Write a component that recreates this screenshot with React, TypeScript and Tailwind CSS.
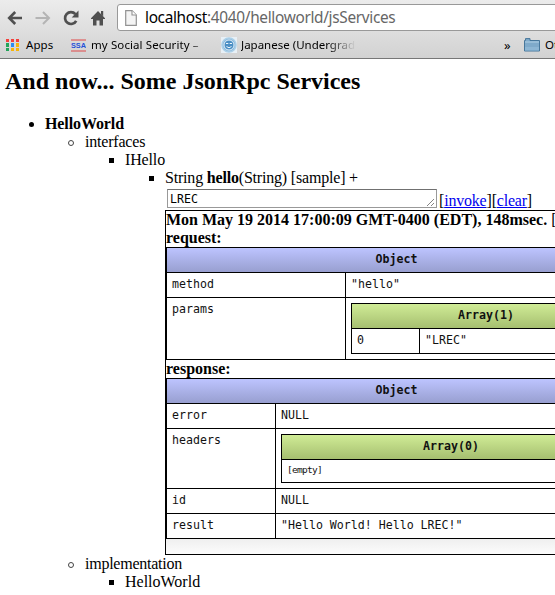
import type { ReactNode } from "react";

const mono = "font-['DejaVu_Sans_Mono',monospace] text-[11.6px] leading-[14px]";
const ui = "font-['Noto_Sans',sans-serif]";

function BackArrow() {
  return (
    <svg className="shrink-0" width="16" height="14" viewBox="0 0 16 14" fill="none" stroke="#505050" strokeWidth="2.6">
      <path d="M15 7H2.5M8.2 1L2.2 7L8.2 13" />
    </svg>
  );
}

function ForwardArrow() {
  return (
    <svg className="shrink-0" width="16" height="14" viewBox="0 0 16 14" fill="none" stroke="#b4b4b4" strokeWidth="2">
      <path d="M0.5 7H14M8 1L14 7L8 13" />
    </svg>
  );
}

function Reload() {
  return (
    <svg className="shrink-0" width="17" height="16" viewBox="0 0 17 16">
      <path d="M12.4 4.2A5.9 5.9 0 1 0 13.2 10.8" fill="none" stroke="#505050" strokeWidth="2.7" />
      <path d="M15.5 0.5V7.4H8.7Z" fill="#505050" />
    </svg>
  );
}

function Home() {
  return (
    <svg className="shrink-0" width="14" height="16" viewBox="0 0 14 16" fill="#505050">
      <path d="M7 1L14 8.3V9H12V15.5H8.5V10.5H5.5V15.5H2V9H0V8.3Z" />
      <path d="M10 1H12.2V6.5L10 4.5Z" />
    </svg>
  );
}

function PageIcon() {
  return (
    <svg className="shrink-0" width="12" height="16" viewBox="0 0 12 16">
      <path d="M0.7 0.7H7L11.3 5V15.3H0.7Z" fill="#f4f4f4" stroke="#929292" strokeWidth="1.2" />
      <path d="M7 0.7V5H11.3" fill="#fff" stroke="#929292" strokeWidth="1.1" />
    </svg>
  );
}

const appColors = [
  "bg-[#f4403b]", "bg-[#f4403b]", "bg-[#f4403b]",
  "bg-[#23a45a]", "bg-[#2c8cf0]", "bg-[#f6b40a]",
  "bg-[#23a45a]", "bg-[#f6b40a]", "bg-[#f6b40a]",
];

function Browser() {
  return (
    <header className={`${ui} h-[59px] w-[555px] overflow-hidden border-b border-[#777] bg-linear-to-b from-[#ececec] to-[#d2d2d2]`}>
      <div className="flex h-[31px] items-start pl-[7px]">
        <div className="flex h-[35px] shrink-0 items-center">
          <BackArrow />
          <span className="w-3" />
          <ForwardArrow />
          <span className="w-3" />
          <Reload />
          <span className="w-[11px]" />
          <Home />
        </div>
        <div className="mt-1 ml-3 flex h-[27px] w-[460px] shrink-0 items-center rounded-l-[3px] border border-[#999] bg-white pl-[7px]">
          <PageIcon />
          <span className="ml-[8px] whitespace-nowrap text-[15.4px] leading-[22px] tracking-[-0.33px] text-[#666]">
            <span className="text-black">localhost</span>:4040/helloworld/jsServices
          </span>
        </div>
      </div>
      <div className="flex h-[28px] items-center pl-[6px] text-[11.5px] leading-[16px] whitespace-nowrap text-black">
        <div className="grid w-[13px] shrink-0 grid-cols-3 gap-[1.5px]">
          {appColors.map((c, i) => (
            <i key={i} className={`h-[3.3px] w-[3.3px] ${c}`} />
          ))}
        </div>
        <span className="ml-[7px] w-[45px] shrink-0 tracking-[0.1px]">Apps</span>
        <svg className="shrink-0" width="15" height="13" viewBox="0 0 15 13">
          <path d="M0 1H15M0 12H15" stroke="#e04848" strokeWidth="1" />
          <text x="0" y="9.4" textLength="15" lengthAdjust="spacingAndGlyphs" fill="#2450d8" fontFamily="Liberation Sans" fontWeight="700" fontSize="8">SSA</text>
        </svg>
        <span className="ml-[5px] w-[120px] shrink-0 overflow-hidden bg-linear-to-r from-black from-82% to-transparent bg-clip-text tracking-[0.1px] text-transparent">my Social Security – </span>
        <svg className="ml-[10px] shrink-0" width="16" height="16" viewBox="0 0 16 16">
          <rect width="16" height="16" fill="#e8f0f6" />
          <circle cx="8" cy="8" r="7" fill="#8dbce0" stroke="#acd0e8" strokeWidth="1.5" />
          <circle cx="8" cy="8" r="5" fill="#4b8fc4" stroke="#e0edf6" strokeWidth="1" />
          <path d="M5 6.5H7.3M8.7 6.5H11M5.5 9.5Q8 12 10.5 9.5" stroke="#edf5fa" fill="none" />
        </svg>
        <span className="ml-1 w-[115px] shrink-0 overflow-hidden bg-linear-to-r from-black from-75% to-transparent bg-clip-text text-transparent">Japanese (Undergrad</span>
        <span className="ml-[148px] w-[20px] shrink-0 text-[13px]">»</span>
        <svg className="shrink-0" width="16" height="14" viewBox="0 0 16 14">
          <path d="M0.5 13V2.5H1.5V0.6H6V2.5H15.5V13Z" fill="#7faaca" stroke="#47779b" />
          <path d="M1 4H15" stroke="#b1cfe4" />
          <path d="M1 9H15V12.5H1Z" fill="#8db6d4" />
        </svg>
        <span className="ml-[5px] shrink-0">Other Bookmarks</span>
      </div>
    </header>
  );
}

function Bullet({ kind }: { kind: "disc" | "circle" | "square" }) {
  const shape = {
    disc: "h-[5px] w-[5px] rounded-full bg-black mr-[11px]",
    circle: "h-[6px] w-[6px] rounded-full border border-[#444] mr-[11px]",
    square: "h-[5px] w-[5px] bg-black mr-[11px]",
  }[kind];
  return <i className={`mt-px shrink-0 ${shape}`} />;
}

function Item({ kind, children }: { kind: "disc" | "circle" | "square"; children: ReactNode }) {
  return (
    <div className="-ml-10 flex h-[18px] items-center whitespace-nowrap">
      <span className="flex w-10 shrink-0 items-center justify-end">
        <Bullet kind={kind} />
      </span>
      <span>{children}</span>
    </div>
  );
}

function Head({ color, children }: { color: "blue" | "green"; children: ReactNode }) {
  const fill = color === "blue" ? "from-[#bdc4ff] to-[#989fd0]" : "from-[#d0ec96] to-[#a6bf70]";
  return (
    <div className={`flex h-[25px] items-center justify-center border-b border-black bg-linear-to-b pb-[3px] font-bold ${fill}`}>
      {children}
    </div>
  );
}

function Row({ name, split, height, last, children }: { name: string; split: string; height: string; last?: boolean; children: ReactNode }) {
  return (
    <div className={`flex ${height} ${last ? "" : "border-b border-black"}`}>
      <div className={`${split} shrink-0 border-r border-black pt-[4px] pl-[5px]`}>{name}</div>
      <div className="grow pt-[4px] pl-[5px]">{children}</div>
    </div>
  );
}

function Result() {
  return (
    <section className="h-[345px] w-[463px] border border-black bg-white">
      <div className="h-[18px] font-bold whitespace-nowrap">
        Mon May 19 2014 17:00:09 GMT-0400 (EDT), 148msec. <span className="font-normal">[<a className="text-[#0000ee] underline">remove</a>]</span>
      </div>
      <div className="h-[18px] font-bold">request:</div>
      <div className={`${mono} h-[113px] w-[461px] border border-black bg-white text-[#111]`}>
        <Head color="blue">Object</Head>
        <Row name="method" split="w-[179px]" height="h-[25px]">"hello"</Row>
        <Row name="params" split="w-[179px]" height="h-[61px]" last>
          <div className="mt-px h-[51px] w-[270px] border border-black">
            <Head color="green">Array(1)</Head>
            <Row name="0" split="w-[68px]" height="h-[24px]" last>"LREC"</Row>
          </div>
        </Row>
      </div>
      <div className="h-[18px] font-bold">response:</div>
      <div className={`${mono} h-[161px] w-[461px] border border-black bg-white text-[#111]`}>
        <Head color="blue">Object</Head>
        <Row name="error" split="w-[109px]" height="h-[25px]">NULL</Row>
        <Row name="headers" split="w-[109px]" height="h-[60px]">
          <div className="mt-px h-[49px] w-[340px] border border-black">
            <Head color="green">Array(0)</Head>
            <div className="pt-[3px] pl-[5px] text-[9.5px] tracking-[-0.72px]">[empty]</div>
          </div>
        </Row>
        <Row name="id" split="w-[109px]" height="h-[25px]">NULL</Row>
        <Row name="result" split="w-[109px]" height="h-[24px]" last>"Hello World! Hello LREC!"</Row>
      </div>
      <div className="h-[15px] bg-linear-to-b from-[#efefef] to-[#fcfcfc]" />
    </section>
  );
}

export default function App() {
  return (
    <div className="h-[595px] w-[555px] overflow-hidden bg-white">
      <Browser />
      <main className="pl-[5px] font-['Liberation_Serif',serif] text-[16px] leading-[18px] text-black">
        <h1 className="h-[56px] pt-[9px] text-[24px] leading-[27px] font-bold whitespace-nowrap">And now... Some JsonRpc Services</h1>
        <div className="pl-10">
          <Item kind="disc"><b className="tracking-[-0.1px]">HelloWorld</b></Item>
          <div className="pl-10">
            <Item kind="circle"><span className="tracking-[-0.2px]">interfaces</span></Item>
            <div className="pl-10">
              <Item kind="square"><span className="tracking-[-0.15px]">IHello</span></Item>
              <div className="pl-10">
                <Item kind="square">
                  <span className="tracking-[-0.19px]">String <b>hello</b>(String) [sample] +</span>
                </Item>
                <div className="flex h-[23px] items-start pt-[2px] pl-[2px] whitespace-nowrap">
                  <div className="flex h-[19px] w-[270px] shrink-0 justify-between border border-[#999] border-t-[#707070] pl-[2px]">
                    <span className={mono + " pt-[2px]"}>LREC</span>
                    <svg className="self-end" width="10" height="10" viewBox="0 0 10 10" stroke="#777" strokeWidth="0.9">
                      <path d="M1 9L8 2M5 9L8 6" />
                    </svg>
                  </div>
                  <span className="mt-[3px] ml-[2px] tracking-[-0.2px]">
                    [<a className="text-[#0000ee] underline">invoke</a>][<a className="text-[#0000ee] underline">clear</a>]
                  </span>
                </div>
                <Result />
              </div>
            </div>
            <Item kind="circle"><span className="tracking-[-0.25px]">implementation</span></Item>
            <div className="pl-10">
              <Item kind="square">HelloWorld</Item>
            </div>
          </div>
        </div>
      </main>
    </div>
  );
}
